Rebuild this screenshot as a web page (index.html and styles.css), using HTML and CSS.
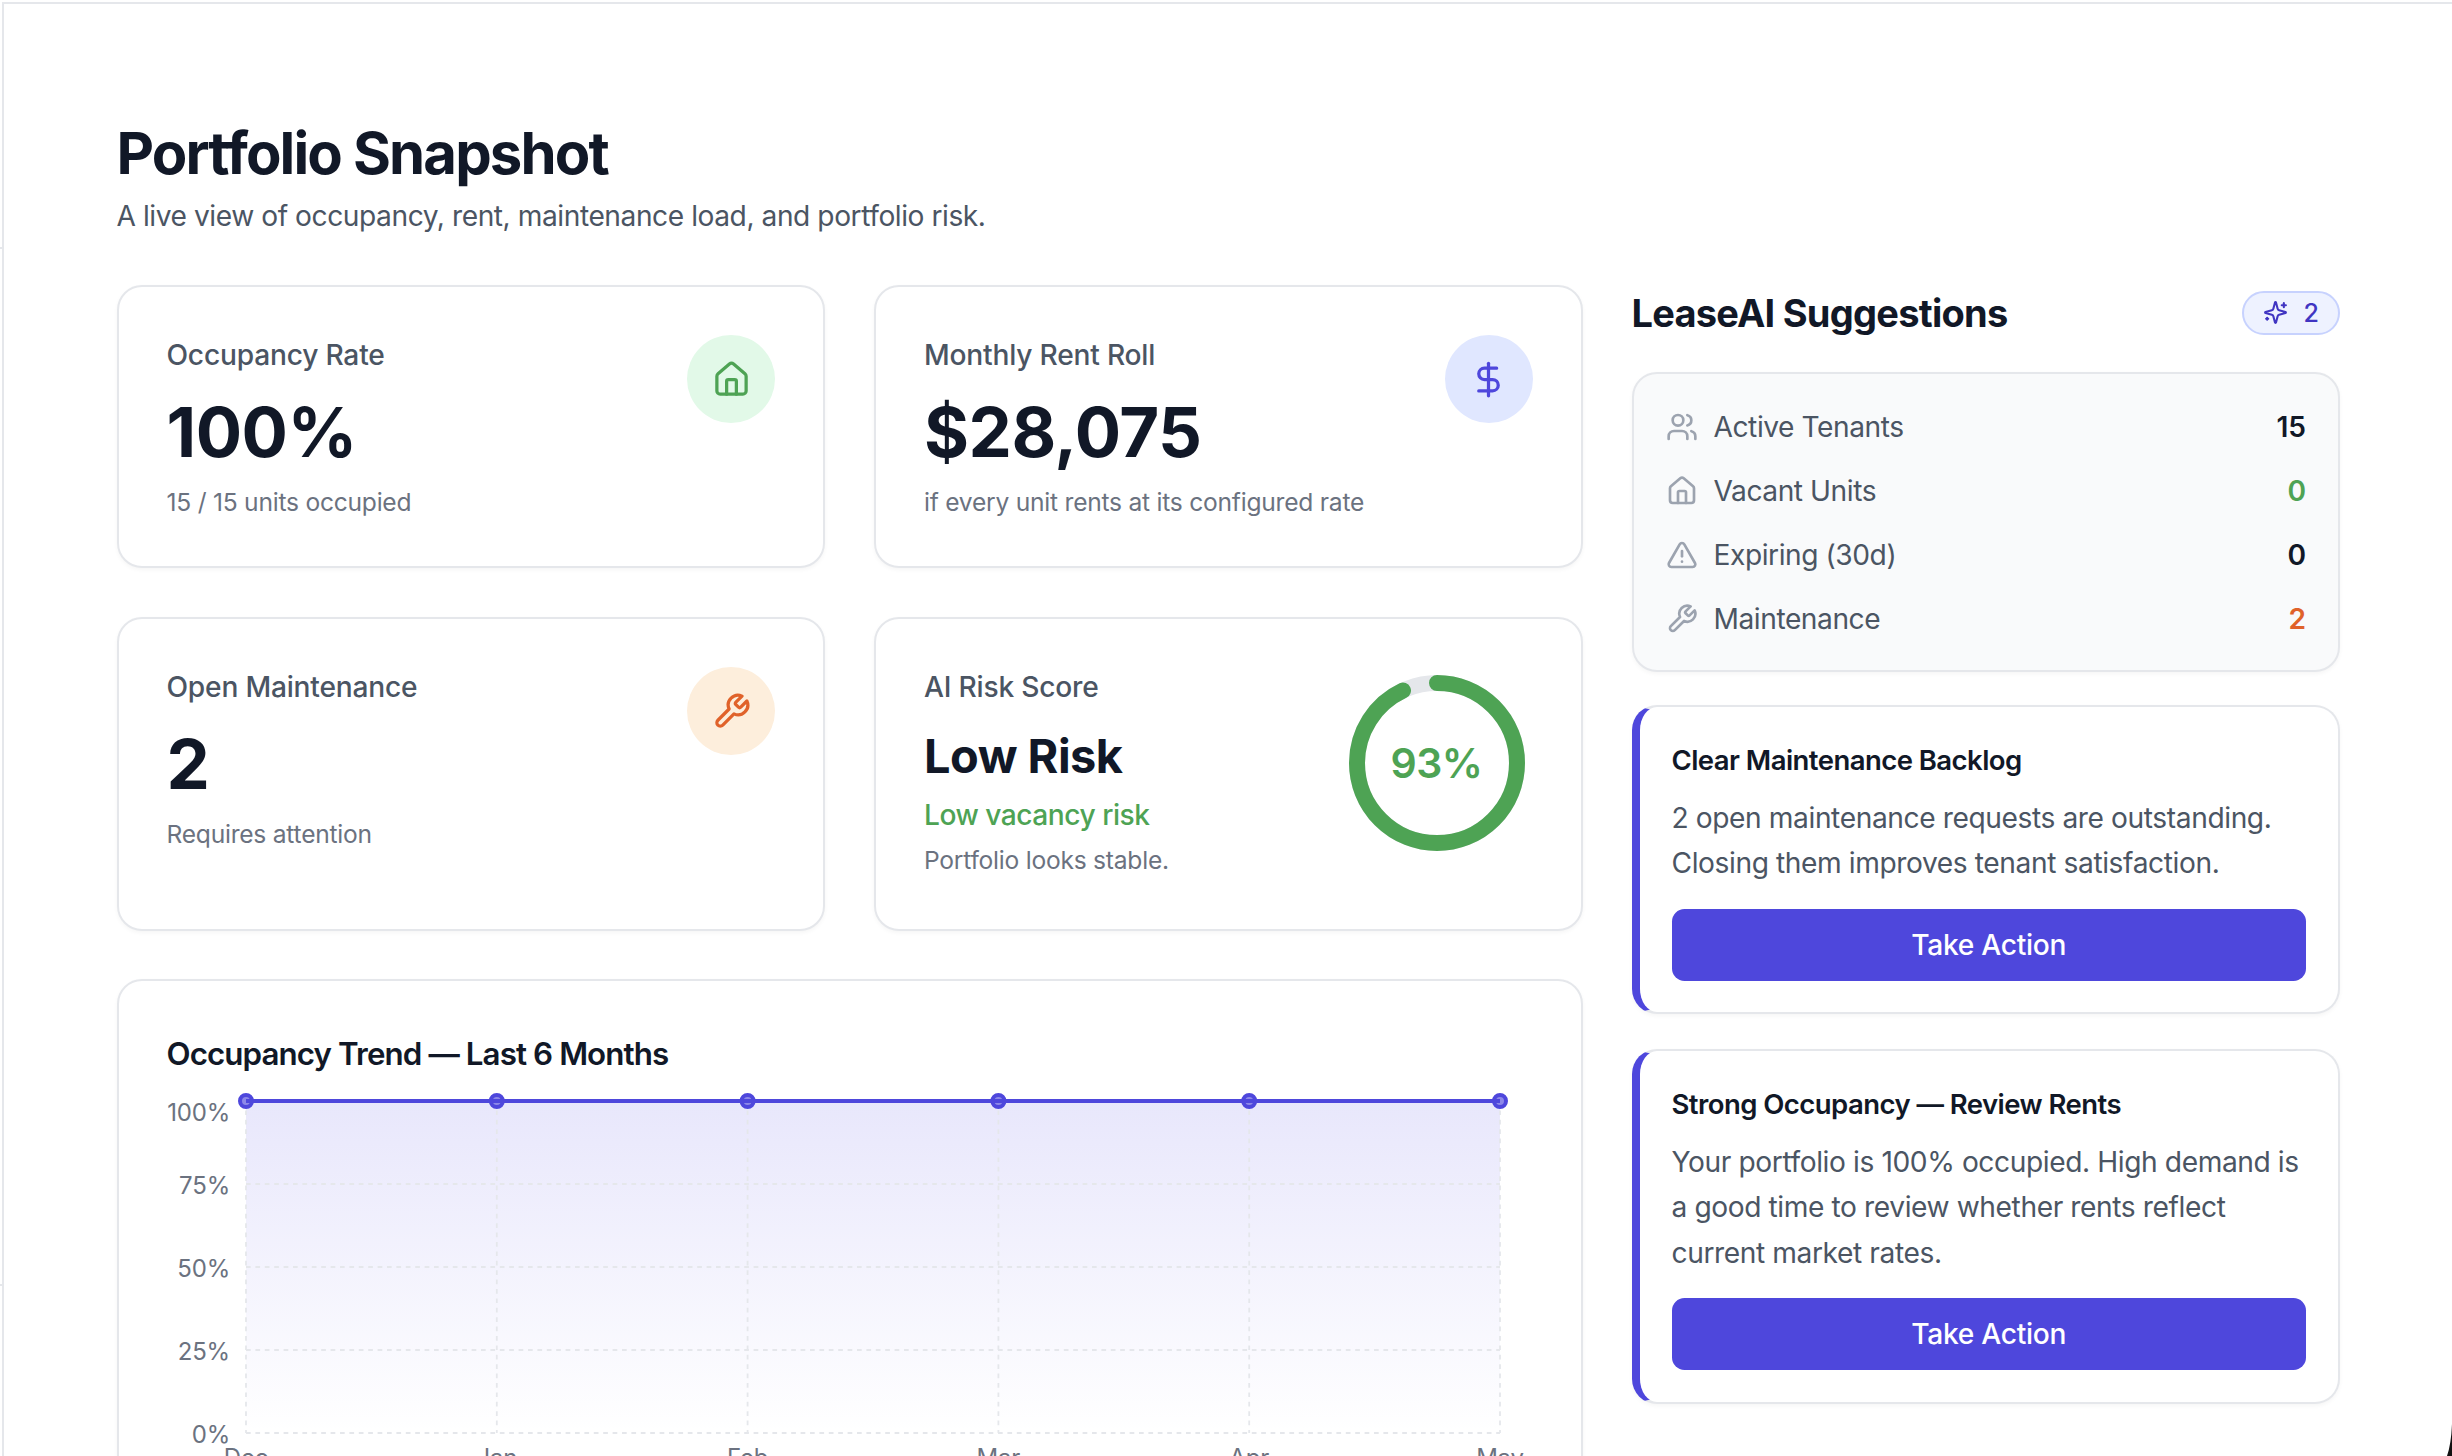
FILE: index.html
```html
<!DOCTYPE html>
<html lang="en">
<head>
<meta charset="utf-8">
<title>Portfolio Snapshot</title>
<link rel="stylesheet" href="styles.css">
</head>
<body>
<div class="frame">
  <header class="page-head">
    <h1>Portfolio Snapshot</h1>
    <p>A live view of occupancy, rent, maintenance load, and portfolio risk.</p>
  </header>
  <div class="layout">
    <main class="main-col">
      <div class="stat-grid">
        <section class="card stat">
          <div class="stat-text">
            <div class="stat-label">Occupancy Rate</div>
            <div class="stat-value">100%</div>
            <div class="stat-sub">15 / 15 units occupied</div>
          </div>
          <div class="stat-icon green-bg">
            <svg class="ico" viewBox="0 0 24 24"><path d="M15 21v-8a1 1 0 0 0-1-1h-4a1 1 0 0 0-1 1v8"/><path d="M3 10a2 2 0 0 1 .709-1.528l7-5.999a2 2 0 0 1 2.582 0l7 5.999A2 2 0 0 1 21 10v9a2 2 0 0 1-2 2H5a2 2 0 0 1-2-2z"/></svg>
          </div>
        </section>
        <section class="card stat">
          <div class="stat-text">
            <div class="stat-label">Monthly Rent Roll</div>
            <div class="stat-value">$28,075</div>
            <div class="stat-sub">if every unit rents at its configured rate</div>
          </div>
          <div class="stat-icon indigo-bg">
            <svg class="ico" viewBox="0 0 24 24"><line x1="12" x2="12" y1="2" y2="22"/><path d="M17 5H9.5a3.5 3.5 0 0 0 0 7h5a3.5 3.5 0 0 1 0 7H6"/></svg>
          </div>
        </section>
        <section class="card stat stat-tall">
          <div class="stat-text">
            <div class="stat-label">Open Maintenance</div>
            <div class="stat-value">2</div>
            <div class="stat-sub">Requires attention</div>
          </div>
          <div class="stat-icon orange-bg">
            <svg class="ico" viewBox="0 0 24 24"><path d="M14.7 6.3a1 1 0 0 0 0 1.4l1.6 1.6a1 1 0 0 0 1.4 0l3.77-3.77a6 6 0 0 1-7.94 7.94l-6.91 6.91a2.12 2.12 0 0 1-3-3l6.91-6.91a6 6 0 0 1 7.94-7.94l-3.76 3.76z"/></svg>
          </div>
        </section>
        <section class="card stat stat-tall">
          <div class="stat-text">
            <div class="stat-label">AI Risk Score</div>
            <div class="risk-value">Low Risk</div>
            <div class="risk-note">Low vacancy risk</div>
            <div class="stat-sub risk-sub">Portfolio looks stable.</div>
          </div>
          <div class="ring">
            <svg viewBox="0 0 176 176">
              <circle class="ring-track" cx="88" cy="88" r="80"/>
              <circle class="ring-fill" cx="88" cy="88" r="80" pathLength="100" stroke-dasharray="93 100" transform="rotate(-90 88 88)"/>
            </svg>
            <span class="ring-text">93%</span>
          </div>
        </section>
      </div>
      <section class="card chart-card">
        <h3>Occupancy Trend — Last 6 Months</h3>
        <svg class="chart" viewBox="0 0 1465 420">
          <defs>
            <linearGradient id="area" x1="0" y1="0" x2="0" y2="1">
              <stop offset="0" stop-color="#4f46e5" stop-opacity="0.13"/>
              <stop offset="1" stop-color="#4f46e5" stop-opacity="0"/>
            </linearGradient>
          </defs>
          <rect class="area" x="129" y="0" width="1254" height="332"/>
          <g class="grid">
            <line x1="129" x2="1383" y1="83" y2="83"/>
            <line x1="129" x2="1383" y1="166" y2="166"/>
            <line x1="129" x2="1383" y1="249" y2="249"/>
            <line x1="129" x2="1383" y1="332" y2="332"/>
            <line x1="129" x2="129" y1="0" y2="332"/>
            <line x1="379.8" x2="379.8" y1="0" y2="332"/>
            <line x1="630.6" x2="630.6" y1="0" y2="332"/>
            <line x1="881.4" x2="881.4" y1="0" y2="332"/>
            <line x1="1132.2" x2="1132.2" y1="0" y2="332"/>
            <line x1="1383" x2="1383" y1="0" y2="332"/>
          </g>
          <g class="dots">
            <circle cx="129" cy="0" r="6"/>
            <circle cx="379.8" cy="0" r="6"/>
            <circle cx="630.6" cy="0" r="6"/>
            <circle cx="881.4" cy="0" r="6"/>
            <circle cx="1132.2" cy="0" r="6"/>
            <circle cx="1383" cy="0" r="6"/>
          </g>
          <line class="trend" x1="129" x2="1383" y1="0" y2="0"/>
          <g class="y-axis">
            <text x="113" y="20">100%</text>
            <text x="113" y="93">75%</text>
            <text x="113" y="176">50%</text>
            <text x="113" y="259">25%</text>
            <text x="113" y="342">0%</text>
          </g>
          <g class="x-axis">
            <text x="129" y="365">Dec</text>
            <text x="379.8" y="365">Jan</text>
            <text x="630.6" y="365">Feb</text>
            <text x="881.4" y="365">Mar</text>
            <text x="1132.2" y="365">Apr</text>
            <text x="1383" y="365">May</text>
          </g>
        </svg>
      </section>
    </main>
    <aside class="side-col">
      <div class="side-head">
        <h2>LeaseAI Suggestions</h2>
        <span class="badge">
          <svg class="ico" viewBox="0 0 24 24"><path d="M9.937 15.5A2 2 0 0 0 8.5 14.063l-6.135-1.582a.5.5 0 0 1 0-.962L8.5 9.936A2 2 0 0 0 9.937 8.5l1.582-6.135a.5.5 0 0 1 .963 0L14.063 8.5A2 2 0 0 0 15.5 9.937l6.135 1.581a.5.5 0 0 1 0 .964L15.5 14.063a2 2 0 0 0-1.437 1.437l-1.582 6.135a.5.5 0 0 1-.963 0z"/><path d="M20 3v4"/><path d="M22 5h-4"/><path d="M4 17v2"/><path d="M5 18H3"/></svg>
          2
        </span>
      </div>
      <div class="summary">
        <div class="summary-row">
          <svg class="ico" viewBox="0 0 24 24"><path d="M16 21v-2a4 4 0 0 0-4-4H6a4 4 0 0 0-4 4v2"/><path d="M16 3.128a4 4 0 0 1 0 7.744"/><path d="M22 21v-2a4 4 0 0 0-3-3.87"/><circle cx="9" cy="7" r="4"/></svg>
          <span class="summary-label">Active Tenants</span>
          <span class="summary-value">15</span>
        </div>
        <div class="summary-row">
          <svg class="ico" viewBox="0 0 24 24"><path d="M15 21v-8a1 1 0 0 0-1-1h-4a1 1 0 0 0-1 1v8"/><path d="M3 10a2 2 0 0 1 .709-1.528l7-5.999a2 2 0 0 1 2.582 0l7 5.999A2 2 0 0 1 21 10v9a2 2 0 0 1-2 2H5a2 2 0 0 1-2-2z"/></svg>
          <span class="summary-label">Vacant Units</span>
          <span class="summary-value green">0</span>
        </div>
        <div class="summary-row">
          <svg class="ico" viewBox="0 0 24 24"><path d="m21.73 18-8-14a2 2 0 0 0-3.48 0l-8 14A2 2 0 0 0 4 21h16a2 2 0 0 0 1.73-3"/><path d="M12 9v4"/><path d="M12 17h.01"/></svg>
          <span class="summary-label">Expiring (30d)</span>
          <span class="summary-value">0</span>
        </div>
        <div class="summary-row">
          <svg class="ico" viewBox="0 0 24 24"><path d="M14.7 6.3a1 1 0 0 0 0 1.4l1.6 1.6a1 1 0 0 0 1.4 0l3.77-3.77a6 6 0 0 1-7.94 7.94l-6.91 6.91a2.12 2.12 0 0 1-3-3l6.91-6.91a6 6 0 0 1 7.94-7.94l-3.76 3.76z"/></svg>
          <span class="summary-label">Maintenance</span>
          <span class="summary-value orange">2</span>
        </div>
      </div>
      <article class="card suggestion">
        <h4>Clear Maintenance Backlog</h4>
        <p>2 open maintenance requests are outstanding. Closing them improves tenant satisfaction.</p>
        <button class="action">Take Action</button>
      </article>
      <article class="card suggestion">
        <h4>Strong Occupancy — Review Rents</h4>
        <p>Your portfolio is 100% occupied. High demand is a good time to review whether rents reflect current market rates.</p>
        <button class="action">Take Action</button>
      </article>
    </aside>
  </div>
</div>
<span class="tick tick-upper"></span>
<span class="tick tick-lower"></span>
<svg class="corner" viewBox="0 0 6 32"><path d="M6 0Q5.2 20 1 32H6Z"/></svg>
</body>
</html>
```
FILE: styles.css
```css
* { box-sizing: border-box; }
html, body { margin: 0; height: 100%; overflow: hidden; background: #fff; }
body { font-family: Inter, "Liberation Sans", sans-serif; color: #111827; position: relative; }
.frame {
  height: 1456px;
  overflow: hidden;
  margin: 2px 0 0 2px;
  border-top: 2px solid #e5e7eb;
  border-left: 2px solid #e5e7eb;
  padding: 115px 112px 0 112.5px;
}
.page-head h1 {
  margin: 0;
  font-size: 58px;
  line-height: 68px;
  font-weight: 700;
  letter-spacing: -1.85px;
}
.page-head p {
  margin: 7px 0 0;
  font-size: 28.15px;
  line-height: 44px;
  letter-spacing: -0.44px;
  color: #4b5563;
}
.layout {
  margin-top: 47px;
  display: grid;
  grid-template-columns: repeat(3, 1fr);
  gap: 49px;
}
.main-col { grid-column: span 2; display: flex; flex-direction: column; gap: 48px; }
.stat-grid { display: grid; grid-template-columns: 1fr 1fr; gap: 49px; }
.card {
  background: #fff;
  border: 2px solid #e5e7eb;
  border-radius: 25px;
  box-shadow: 0 2px 4px rgba(0, 0, 0, 0.04);
}
.stat {
  display: flex;
  justify-content: space-between;
  align-items: flex-start;
  padding: 47px 48px 48px;
  height: 283px;
}
.stat-tall { height: 314px; }
.stat-label { font-size: 28.15px; line-height: 42px; font-weight: 500; letter-spacing: -0.2px; color: #4b5563; }
.stat-value {
  margin-top: 12px;
  font-size: 68.8px;
  line-height: 88px;
  font-weight: 700;
  letter-spacing: -0.5px;
}
.stat-sub { margin-top: 7px; font-size: 24.6px; line-height: 38px; letter-spacing: -0.24px; color: #6b7280; }
.stat-icon {
  flex: none;
  width: 88px;
  height: 88px;
  margin-top: 1px;
  border-radius: 50%;
  display: flex;
  align-items: center;
  justify-content: center;
}
.stat-icon .ico { width: 39px; height: 39px; }
.ico { fill: none; stroke: currentColor; stroke-width: 2; stroke-linecap: round; stroke-linejoin: round; flex: none; }
.green-bg { background: #e2f9e8; color: #4ea354; }
.indigo-bg { background: #e0e7ff; color: #4e47dc; }
.orange-bg { background: #fdeedc; color: #e0622a; }
.risk-value { margin-top: 17px; font-size: 46.9px; line-height: 62px; font-weight: 700; letter-spacing: -0.5px; }
.risk-note { margin-top: 7px; font-size: 28.15px; line-height: 42px; font-weight: 500; letter-spacing: -0.49px; color: #4ea354; }
.risk-sub { margin-top: 5px; }
.ring { position: relative; width: 176px; height: 176px; flex: none; margin: 9px 8px 0 0; }
.ring svg { display: block; width: 176px; height: 176px; }
.ring-track { fill: none; stroke: #e5e7eb; stroke-width: 16; }
.ring-fill { fill: none; stroke: #4ea354; stroke-width: 16; stroke-linecap: round; }
.ring-text {
  position: absolute;
  inset: 0;
  display: flex;
  align-items: center;
  justify-content: center;
  font-size: 41px;
  font-weight: 600;
  letter-spacing: -0.5px;
  color: #4ea354;
}
.chart-card { padding: 49.5px 48px 0; height: 620px; overflow: hidden; position: relative; }
.chart-card h3 {
  margin: 0;
  font-size: 31.3px;
  line-height: 46px;
  font-weight: 600;
  letter-spacing: -0.9px;
}
.chart { position: absolute; left: -2px; top: 120px; width: 1465px; height: 420px; overflow: visible; }
.area { fill: url(#area); }
.grid line { stroke: #e5e7eb; stroke-width: 1.8; stroke-dasharray: 4.7 4.7; }
.dots circle { fill: #8d88e8; stroke: #4e47dc; stroke-width: 4; }
.trend { stroke: #4e47dc; stroke-width: 4; }
.y-axis text { font-size: 24px; letter-spacing: -0.2px; fill: #6b7280; text-anchor: end; }
.x-axis text { font-size: 24px; letter-spacing: -0.2px; fill: #6b7280; text-anchor: middle; }
.side-col { display: flex; flex-direction: column; }
.side-head { display: flex; justify-content: space-between; align-items: center; height: 48px; margin-top: 3.5px; }
.side-head h2 { margin: 0; font-size: 38px; line-height: 48px; font-weight: 700; letter-spacing: -0.75px; }
.badge {
  display: flex;
  align-items: center;
  gap: 16px;
  height: 44px;
  padding: 0 19px;
  border-radius: 22px;
  border: 2px solid #c7d2fe;
  background: #eef2ff;
  color: #4035c2;
  font-size: 25px;
  font-weight: 500;
}
.badge .ico { width: 25px; height: 25px; }
.summary {
  margin-top: 35px;
  background: #f9fafb;
  border: 2px solid #e5e7eb;
  border-radius: 25px;
  box-shadow: 0 2px 4px rgba(0, 0, 0, 0.04);
  padding: 21px 32px;
  height: 300px;
}
.summary-row { display: flex; align-items: center; height: 64px; font-size: 28.15px; }
.summary-row .ico { width: 32px; height: 32px; color: #9ca3af; margin-right: 16px; }
.summary-label { flex: 1; letter-spacing: -0.44px; color: #4b5563; }
.summary-value { font-weight: 600; color: #111827; }
.green { color: #4ea354; }
.orange { color: #e0622a; }
.suggestion {
  margin-top: 33px;
  border-left: 8px solid #4e47dc;
  padding: 30px 32px 31.5px;
}
.suggestion + .suggestion { margin-top: 34.5px; }
.suggestion h4 { margin: 0; font-size: 27.5px; line-height: 46px; font-weight: 600; letter-spacing: -0.55px; }
.suggestion p { margin: 13px 0 0; font-size: 28.15px; line-height: 45.6px; letter-spacing: -0.4px; color: #4b5563; }
.action {
  display: block;
  width: 100%;
  height: 72px;
  margin-top: 22px;
  border: 0;
  border-radius: 12.5px;
  background: #4e47dc;
  color: #fff;
  font: 500 28.15px Inter, "Liberation Sans", sans-serif;
  letter-spacing: -0.28px;
}
.tick { position: absolute; left: 0; width: 3px; height: 2px; background: #e5e7eb; }
.tick-upper { top: 247px; }
.tick-lower { top: 1284px; }
.corner { position: absolute; right: 0; bottom: 0; width: 6px; height: 32px; fill: #111; }
```
